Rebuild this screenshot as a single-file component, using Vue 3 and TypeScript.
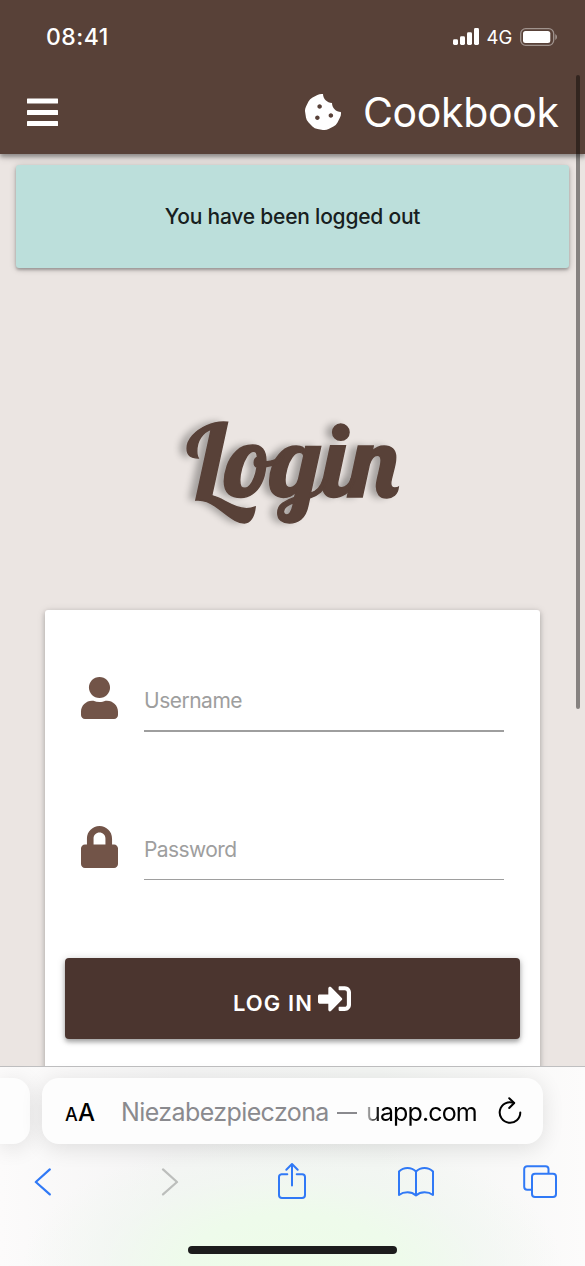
<script setup lang="ts">
import { ref } from 'vue'

interface Field {
  id: string
  label: string
  type: string
  icon: string
}

const userIcon = 'M224 256c70.7 0 128-57.3 128-128S294.7 0 224 0 96 57.3 96 128s57.3 128 128 128zm89.6 32h-16.7c-22.2 10.2-46.9 16-72.9 16s-50.6-5.8-72.9-16h-16.7C60.2 288 0 348.2 0 422.4V464c0 26.5 21.5 48 48 48h352c26.5 0 48-21.5 48-48v-41.6c0-74.2-60.2-134.4-134.4-134.4z'
const lockIcon = 'M400 224h-24v-72C376 68.2 307.8 0 224 0S72 68.2 72 152v72H48c-26.5 0-48 21.5-48 48v192c0 26.5 21.5 48 48 48h352c26.5 0 48-21.5 48-48V272c0-26.5-21.5-48-48-48zm-104 0H152v-72c0-39.7 32.3-72 72-72s72 32.3 72 72v72z'

const fields: Field[] = [
  { id: 'username', label: 'Username', type: 'text', icon: userIcon },
  { id: 'password', label: 'Password', type: 'password', icon: lockIcon },
]
const values = ref<Record<string, string>>({ username: '', password: '' })
</script>

<template>
  <div class="phone">
    <header class="top">
      <div class="status">
        <span class="time">08:41</span>
        <div class="status-right">
          <svg class="signal" width="26" height="18" viewBox="0 0 26 18" fill="#fff">
            <rect x="0" y="11.3" width="5" height="5.7" rx="1.4" />
            <rect x="7" y="8.2" width="5" height="8.8" rx="1.4" />
            <rect x="14" y="4.2" width="5" height="12.8" rx="1.4" />
            <rect x="21" y="0" width="5" height="17" rx="1.4" />
          </svg>
          <span class="net">4G</span>
          <svg class="battery" width="38" height="18" viewBox="0 0 38 18">
            <rect x=".7" y=".7" width="33" height="16.6" rx="5" fill="none" stroke="#fff" stroke-opacity=".43" stroke-width="1.3" />
            <rect x="3" y="3" width="27.3" height="12" rx="2.5" fill="#fff" />
            <path d="M35.3 6v6q1.7-1 1.7-3t-1.7-3z" fill="#fff" fill-opacity=".45" />
          </svg>
        </div>
      </div>
      <nav class="nav">
        <svg class="menu" width="31" height="28" viewBox="0 0 31 28" fill="#fff">
          <rect y=".4" width="31" height="5" rx=".5" />
          <rect y="12" width="31" height="5" rx=".5" />
          <rect y="23" width="31" height="5" rx=".5" />
        </svg>
        <div class="brand">
          <svg width="36" height="36" viewBox="0 0 512 512" fill="#fff">
            <path d="M510.52 255.82c-69.97-.85-126.47-57.69-126.47-127.86-70.17 0-127-56.49-127.86-126.45-27.26-4.14-55.13.3-79.72 12.82l-69.13 35.22a132.221 132.221 0 0 0-57.79 57.81l-35.1 68.88a132.645 132.645 0 0 0-12.82 80.95l12.08 76.27a132.521 132.521 0 0 0 37.16 72.96l54.77 54.76a132.036 132.036 0 0 0 72.71 37.06l76.71 12.15c27.51 4.36 55.7-.11 80.53-12.76l69.13-35.21a132.273 132.273 0 0 0 57.79-57.81l35.1-68.88c12.56-24.64 17.01-52.58 12.91-79.91zM176 368c-17.67 0-32-14.33-32-32s14.33-32 32-32 32 14.33 32 32-14.33 32-32 32zm32-160c-17.67 0-32-14.33-32-32s14.33-32 32-32 32 14.33 32 32-14.33 32-32 32zm160 128c-17.67 0-32-14.33-32-32s14.33-32 32-32 32 14.33 32 32-14.33 32-32 32z" />
          </svg>
          <span class="brand-name">Cookbook</span>
        </div>
      </nav>
    </header>

    <main class="content">
      <div class="alert"><span>You have been logged out</span></div>
      <h1 class="title"><span>Login</span></h1>
      <form class="card" @submit.prevent>
        <div v-for="f in fields" :key="f.id" class="field" :class="f.id">
          <svg width="37" height="42" viewBox="0 0 448 512" preserveAspectRatio="none" fill="#725448">
            <path :d="f.icon" />
          </svg>
          <input v-model="values[f.id]" :type="f.type" :placeholder="f.label" :aria-label="f.label" />
        </div>
        <button class="submit" type="submit">
          <span>LOG IN</span>
          <svg width="33" height="33" viewBox="0 0 512 512" fill="#fff">
            <path d="M416 448h-84c-6.6 0-12-5.4-12-12v-40c0-6.6 5.4-12 12-12h84c17.7 0 32-14.3 32-32V160c0-17.7-14.3-32-32-32h-84c-6.6 0-12-5.4-12-12V76c0-6.6 5.4-12 12-12h84c53 0 96 43 96 96v192c0 53-43 96-96 96zm-47-201L201 79c-15-15-41-4.5-41 17v96H24c-13.3 0-24 10.7-24 24v96c0 13.3 10.7 24 24 24h136v96c0 21.5 26 32 41 17l168-168c9.3-9.4 9.3-24.6 0-34z" />
          </svg>
        </button>
      </form>
    </main>

    <footer class="browser">
      <div class="tabs">
        <div class="prev-tab"></div>
        <div class="address">
          <span class="aa"><small>A</small>A</span>
          <span class="insecure">Niezabezpieczona <span class="dash">—</span></span>
          <span class="host">uapp.com</span>
          <svg class="reload" width="24" height="28" viewBox="0 0 24 28" fill="none" stroke="#000" stroke-width="2" stroke-linecap="round" stroke-linejoin="round">
            <path d="M15.8 5.9A10.3 10.3 0 1 0 22.3 15.4" />
            <path d="M11.2 1.2L16.2 6L11.2 11" />
          </svg>
        </div>
      </div>
      <div class="tools">
        <div class="tool">
          <svg width="18" height="28" viewBox="0 0 18 28" fill="none" stroke="#3079f6" stroke-width="2.2" stroke-linecap="round" stroke-linejoin="round">
            <path d="M15.8 1.4L1.8 14L15.8 26.4" />
          </svg>
        </div>
        <div class="tool forward">
          <svg width="18" height="28" viewBox="0 0 18 28" fill="none" stroke="#bcbebc" stroke-width="2.2" stroke-linecap="round" stroke-linejoin="round">
            <path d="M2 1.4L16 14L2 26.4" />
          </svg>
        </div>
        <div class="tool share">
          <svg width="30" height="38" viewBox="0 0 30 38" fill="none" stroke="#3079f6" stroke-width="2" stroke-linecap="round" stroke-linejoin="round">
            <path d="M10.3 12.2H4.5A2.8 2.8 0 0 0 2 15V33A3 3 0 0 0 5 36H25A3 3 0 0 0 28 33V15A2.8 2.8 0 0 0 25.2 12.2H19.7" />
            <path d="M15 23.5V2.2M9.3 7.7L15 2L20.7 7.7" />
          </svg>
        </div>
        <div class="tool">
          <svg width="38" height="32" viewBox="0 0 38 32" fill="none" stroke="#3079f6" stroke-width="2" stroke-linecap="round" stroke-linejoin="round">
            <path d="M19 5.5Q15.5 2 10.5 2Q5.5 2 2 5.5V29Q5.5 26.3 10.5 26.3Q15.5 26.3 19 29.5Q22.5 26.3 27.5 26.3Q32.5 26.3 36 29V5.5Q32.5 2 27.5 2Q22.5 2 19 5.5V29.5" />
          </svg>
        </div>
        <div class="tool windows">
          <svg width="34" height="33" viewBox="0 0 34 34" preserveAspectRatio="none" fill="none" stroke="#3079f6" stroke-width="2">
            <path d="M9 25.5H4.2A3 3 0 0 1 1.2 22.5V4.2A3 3 0 0 1 4.2 1.2H22.5A3 3 0 0 1 25.5 4.2V9" />
            <rect x="9" y="9" width="24" height="24" rx="3" />
          </svg>
        </div>
      </div>
      <div class="home"></div>
    </footer>
    <div class="scrollbar"></div>
  </div>
</template>

<style>
body { margin: 0; overflow: hidden; }
</style>

<style scoped>
.phone {
  position: relative;
  width: 585px;
  height: 1266px;
  display: flex;
  flex-direction: column;
  overflow: hidden;
  background: #ebe5e2;
  font-family: Inter, "Liberation Sans", sans-serif;
}
svg { display: block; flex: none; }
.top {
  flex: none;
  height: 154px;
  background: #584138;
  color: #fff;
  box-shadow: 0 3px 4px rgba(0, 0, 0, .3), 0 2px 9px rgba(0, 0, 0, .2);
  z-index: 1;
}
.status {
  height: 74px;
  box-sizing: border-box;
  padding: 0 27px 0 46px;
  display: flex;
  align-items: center;
  justify-content: space-between;
}
.time { font-size: 23px; font-weight: 500; letter-spacing: .5px; }
.status-right { display: flex; align-items: center; }
.net { width: 41px; text-align: center; font-size: 18.5px; }
.nav {
  height: 76px;
  padding: 0 27px;
  display: flex;
  align-items: center;
  justify-content: space-between;
}
.brand { display: flex; align-items: center; gap: 22px; }
.brand-name { width: 195px; white-space: nowrap; font-size: 41px; font-weight: 400; line-height: 50px; letter-spacing: -.35px; }
.content {
  height: 912px;
  box-sizing: border-box;
  padding: 11px 16px 0;
  overflow: hidden;
}
.alert {
  height: 103px;
  border-radius: 3px;
  background: #bcdfdb;
  box-shadow: 0 2px 3px rgba(0, 0, 0, .26), 0 1px 7px rgba(0, 0, 0, .2);
  display: flex;
  justify-content: center;
  color: #172020;
  font-size: 21px;
  font-weight: 500;
  line-height: 103px;
  letter-spacing: -.22px;
}
.title {
  margin: 0;
  height: 342px;
  box-sizing: border-box;
  padding-top: 39px;
  display: flex;
  align-items: center;
  justify-content: center;
  font: 400 101px/140px Lobster, "Liberation Serif", serif;
  color: #584138;
}
.title span {
  display: block;
  transform: scaleX(1.025);
  -webkit-text-stroke: 1.4px #584138;
  text-shadow: -7px 0 7px rgba(0, 0, 0, .3);
}
.card {
  width: 495px;
  height: 500px;
  box-sizing: border-box;
  margin: 0 auto;
  padding: 53px 20px 0;
  border-radius: 3px;
  background: #fff;
  box-shadow: 0 2px 5px rgba(0, 0, 0, .2), 0 1px 8px rgba(0, 0, 0, .13);
}
.field {
  height: 149px;
  padding: 0 16px;
  display: flex;
  align-items: flex-start;
  gap: 26px;
}
.field svg { margin-top: 14px; }
.field input {
  width: 360px;
  height: 69px;
  box-sizing: border-box;
  padding: 7px 0 0;
  border: 0;
  border-bottom: 2px solid #9e9e9e;
  border-radius: 0;
  outline: 0;
  background: transparent;
  font: 400 21px Inter, "Liberation Sans", sans-serif;
  letter-spacing: -.5px;
}
.field input::placeholder { color: #9e9e9e; opacity: 1; }
.password input { height: 68px; border-bottom-width: 1px; letter-spacing: -.6px; }
.submit {
  width: 455px;
  height: 81px;
  margin: -3px 0 0;
  padding: 0 1px 0 0;
  border: 0;
  border-radius: 4px;
  background: #4b352f;
  color: #fff;
  box-shadow: 0 3px 4px rgba(0, 0, 0, .28), 0 1px 8px rgba(0, 0, 0, .18);
  display: flex;
  align-items: center;
  justify-content: center;
  gap: 5px;
  font: 600 22px Inter, "Liberation Sans", sans-serif;
  letter-spacing: 1.1px;
}
.submit span { padding-top: 8px; }
.browser {
  flex: none;
  height: 200px;
  box-sizing: border-box;
  border-top: 1px solid #bfbfc0;
  background:
    radial-gradient(ellipse 270px 130px at 50% 100%, #edfce8 0%, #eefbeb 40%, rgba(240, 247, 240, .6) 70%, rgba(246, 246, 246, 0) 100%),
    linear-gradient(90deg, #fcfbfb, #f4f4f4 30%, #f3f5f3 65%, #fcfbfb);
  z-index: 2;
}
.tabs {
  height: 77px;
  padding-top: 11px;
  box-sizing: border-box;
  display: flex;
  gap: 12px;
}
.prev-tab, .address {
  height: 66px;
  background: #fdfdfd;
  box-shadow: 0 4px 22px rgba(0, 0, 0, .11);
}
.prev-tab { width: 30px; border-radius: 0 17px 17px 0; }
.address {
  width: 501px;
  box-sizing: border-box;
  border-radius: 17px;
  padding: 2px 21px 0 23px;
  display: flex;
  align-items: center;
  font-size: 25px;
  letter-spacing: -.6px;
  white-space: nowrap;
}
.aa { width: 56px; flex: none; font-size: 24px; font-weight: 450; letter-spacing: -.5px; }
.aa small { font-size: 18px; letter-spacing: .3px; }
.insecure { width: 245px; flex: none; color: #8a8a8e; }
.dash { display: inline-block; transform: scaleX(.8); transform-origin: 40% 50%; }
.host {
  width: 132px;
  flex: none;
  color: transparent;
  background: linear-gradient(90deg, #ccc 0, #000 13px);
  background-clip: text;
  letter-spacing: -.88px;
}
.reload { margin-top: -3px; }
.tools {
  height: 76px;
  box-sizing: border-box;
  padding: 0 27px 0 25px;
  display: flex;
  align-items: center;
  justify-content: space-between;
}
.tool { width: 36px; display: flex; justify-content: center; }
.forward svg { margin-left: 6px; }
.share svg { margin-bottom: 2px; }
.windows svg { margin-bottom: 1px; }
.home { width: 209px; height: 8px; margin: 26px auto 0; border-radius: 4px; background: #1c1c1c; }
.scrollbar {
  position: absolute;
  left: 576px;
  top: 75px;
  width: 4px;
  height: 634px;
  border-radius: 2px;
  background: rgba(0, 0, 0, .43);
  z-index: 3;
}
</style>
